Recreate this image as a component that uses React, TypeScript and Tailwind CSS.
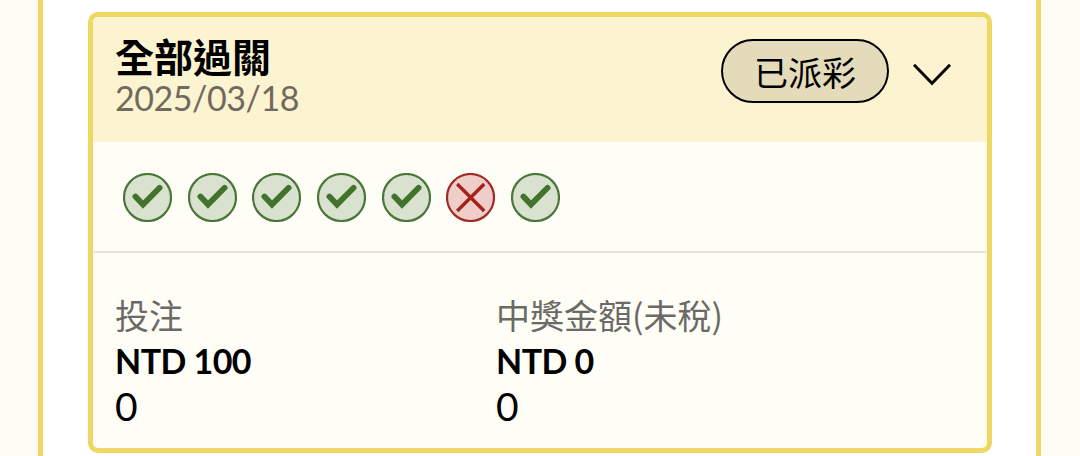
const results = ['win', 'win', 'win', 'win', 'win', 'lose', 'win'];

const amounts = [
  { label: '投注', value: 'NTD 100', extra: '0', width: 'w-[381px]' },
  { label: '中獎金額(未稅)', value: 'NTD 0', extra: '0', width: 'flex-1' }
];

function WinIcon() {
  return (
    <svg viewBox="0 0 49 49" className="w-[49px] h-[49px] shrink-0" fill="none">
      <circle cx="24.5" cy="24.5" r="23.5" fill="#d8e2cf" stroke="#4a763a" strokeWidth="2.2" />
      <path d="M12.4 23.6L20 31.6L36.6 14.8" stroke="#43722c" strokeWidth="5.8" strokeLinecap="round" />
    </svg>
  );
}

function LoseIcon() {
  return (
    <svg viewBox="0 0 49 49" className="w-[49px] h-[49px] shrink-0" fill="none">
      <circle cx="24.5" cy="24.5" r="23.5" fill="#efcec9" stroke="#a12a26" strokeWidth="2.2" />
      <path d="M11.2 11L38.2 38M38.2 11L11.2 38" stroke="#a3221b" strokeWidth="3.4" />
    </svg>
  );
}

export default function App() {
  return (
    <div className="w-full h-[456px] overflow-hidden bg-[#fefdf5] px-[38px] font-['Lato','Noto_Sans_CJK_TC',sans-serif] text-black">
      <div className="h-full w-[1003px] bg-white border-x-[5px] border-[#efd763] px-[45px] pt-3">
        <div className="w-[904px] h-[441px] flex flex-col border-[5px] border-[#efd763] rounded-[10px] bg-[#fffef6] overflow-hidden">

          {/* Header */}
          <div className="h-[125px] shrink-0 flex justify-between bg-[#fcf3d1] pl-[22px] pr-[35px] pt-[22px]">
            <div className="flex flex-col -mt-0.5">
              <span className="text-[39px] leading-[40px] font-bold">全部過關</span>
              <span className="text-[34px] leading-[42px] tracking-[-0.45px] text-[#6f6a5c]">2025/03/18</span>
            </div>
            <div className="flex items-center h-[64px] gap-[23px]">
              <span className="w-[168px] h-[64px] flex items-center justify-center rounded-full border-2 border-black bg-[#e4dbbb] text-[34px] leading-none pt-[3px]">
                已派彩
              </span>
              <svg viewBox="0 0 40 30" className="w-10 h-[30px]" fill="none">
                <path d="M2 8.8L20 27.3L38 8.8" stroke="#0b0a06" strokeWidth="3" />
              </svg>
            </div>
          </div>

          {/* Leg results */}
          <div className="h-[111px] shrink-0 flex items-center gap-[15.7px] border-b-2 border-[#e5e4de] pl-[30px] pt-px">
            {results.map((result, i) => (result === 'win' ? <WinIcon key={i} /> : <LoseIcon key={i} />))}
          </div>

          {/* Amounts */}
          <div className="flex pl-[22px] pt-[39px]">
            {amounts.map((item) => (
              <div key={item.label} className={`flex flex-col ${item.width}`}>
                <span className="font-['Noto_Sans_CJK_TC',sans-serif] text-[34px] leading-[46px] text-[#6b6a66]">{item.label}</span>
                <span className="text-[34px] leading-[46px] tracking-[-0.55px] font-bold">{item.value}</span>
                <span className="text-[39px] leading-[45px]">{item.extra}</span>
              </div>
            ))}
          </div>
        </div>
      </div>
    </div>
  );
}
